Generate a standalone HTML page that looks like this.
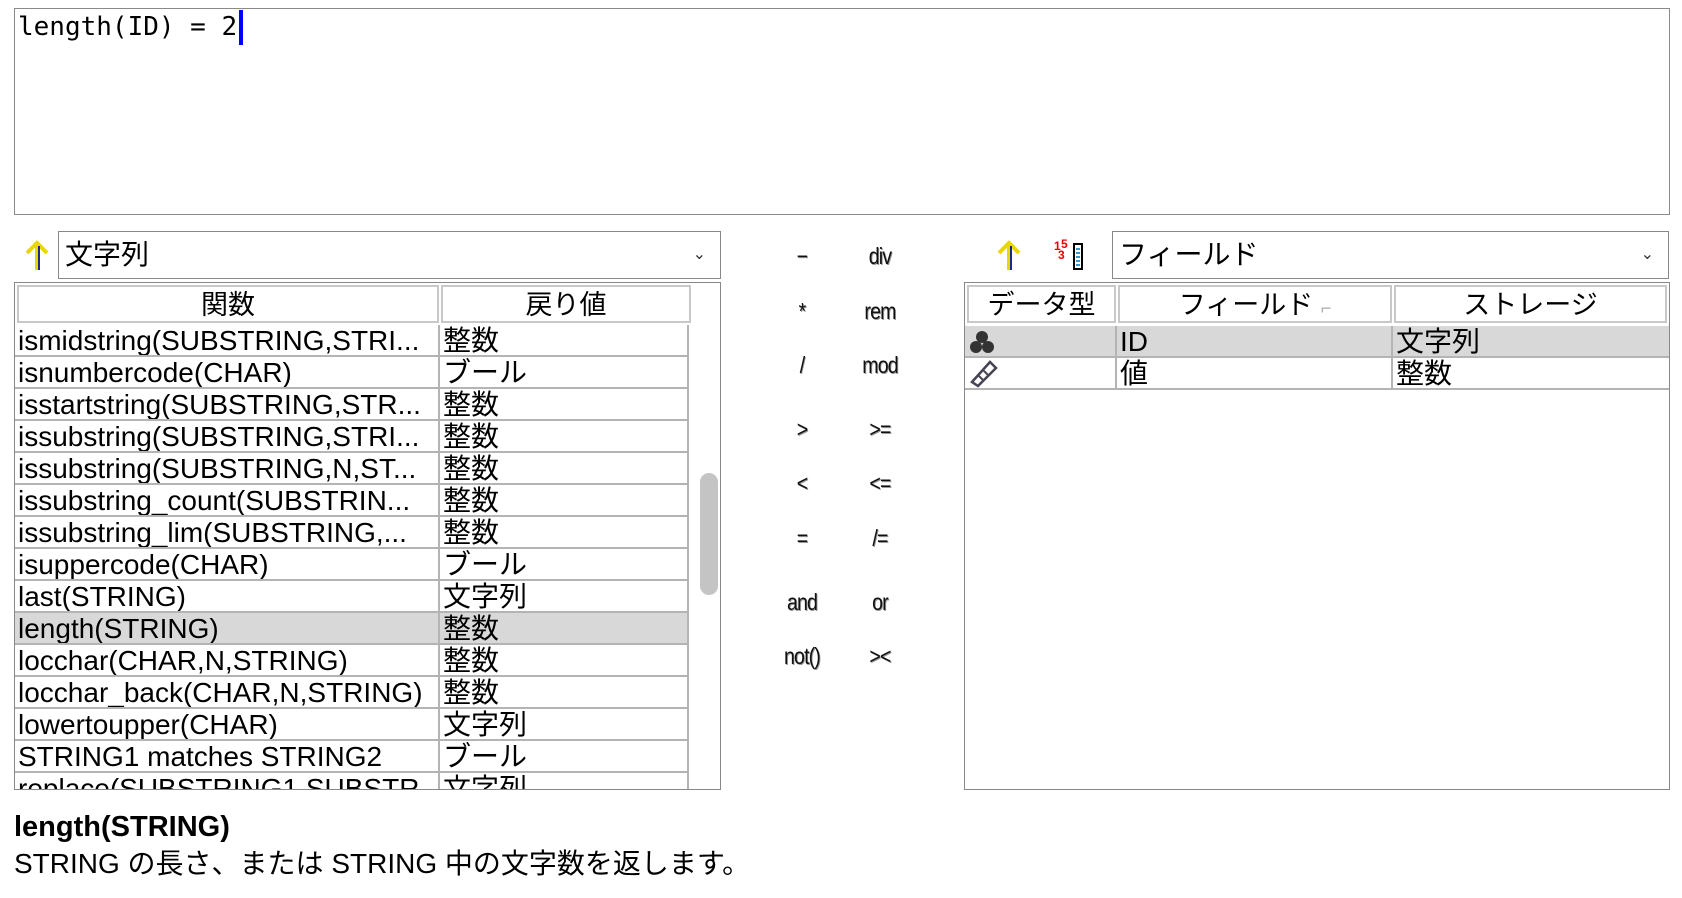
<!DOCTYPE html>
<html><head><meta charset="utf-8"><style>
*{box-sizing:border-box;margin:0;padding:0}
body{width:1682px;height:898px;background:#fff;position:relative;overflow:hidden;font-family:"Liberation Sans","Noto Sans CJK JP",sans-serif;color:#000}
.a{position:absolute}
.ta{left:14px;top:8px;width:1656px;height:207px;border:1px solid #8a8a8a}
.code{left:18px;top:10px;font-family:"DejaVu Sans Mono","Liberation Mono",monospace;font-size:26px;line-height:34px;white-space:pre}
.caret{left:239px;top:10px;width:4px;height:35px;background:#0000ff}
.combo{border:1px solid #888;height:48px;top:231px;font-size:28px;line-height:46px;padding-left:6px}
.chev{position:absolute;right:14px;top:0;font-size:16px;color:#333}
.tbl{border:1px solid #888;top:282px;height:508px;overflow:hidden}
.row{position:absolute;left:0;width:674px;height:32px;font-size:28px;line-height:32px;white-space:nowrap;overflow:hidden}
.cell{position:absolute;top:0;height:32px;border-right:2px solid #b4b4b4;border-bottom:2px solid #b4b4b4;padding-left:3px;overflow:hidden}
.hd{position:absolute;top:2px;height:38px;border:2px solid #c8c8c8;text-align:center;font-size:27px;line-height:36px;background:#fff}
.op{position:absolute;font-size:23px;transform:translateX(-50%) scaleX(.85);color:#111;text-shadow:1px 1px 0 #999;letter-spacing:-1px}
</style></head><body>
<div class="a ta"></div>
<div class="a code">length(ID) = 2</div>
<div class="a caret"></div>

<svg class="a" style="left:24px;top:240px" width="26" height="32" viewBox="0 0 26 32"><path d="M13 3 L13 30" stroke="#e8d800" stroke-width="4"/><path d="M3 13 L13 3 L23 13" stroke="#e8d800" stroke-width="4" fill="none"/><path d="M15 6 L15 30" stroke="#1a2a8a" stroke-width="2"/></svg>
<div class="a combo" style="left:58px;width:663px">文字列<span class="chev">&#8964;</span></div>

<div class="a tbl" style="left:14px;width:707px">
<div class="hd" style="left:2px;width:422px">関数</div>
<div class="hd" style="left:426px;width:250px">戻り値</div>
<div class="a" style="left:685px;top:190px;width:18px;height:122px;background:#c4c4c4;border-radius:9px"></div>
</div>

<div class="op" style="left:802px;top:243px">−</div>
<div class="op" style="left:880px;top:243px">div</div>
<div class="op" style="left:802px;top:298px">*</div>
<div class="op" style="left:880px;top:298px">rem</div>
<div class="op" style="left:802px;top:352px">/</div>
<div class="op" style="left:880px;top:352px">mod</div>
<div class="op" style="left:802px;top:416px">&gt;</div>
<div class="op" style="left:880px;top:416px">&gt;=</div>
<div class="op" style="left:802px;top:470px">&lt;</div>
<div class="op" style="left:880px;top:470px">&lt;=</div>
<div class="op" style="left:802px;top:525px">=</div>
<div class="op" style="left:880px;top:525px">/=</div>
<div class="op" style="left:802px;top:589px">and</div>
<div class="op" style="left:880px;top:589px">or</div>
<div class="op" style="left:802px;top:643px">not()</div>
<div class="op" style="left:880px;top:643px">&gt;&lt;</div>

<svg class="a" style="left:996px;top:240px" width="26" height="32" viewBox="0 0 26 32"><path d="M13 3 L13 30" stroke="#e8d800" stroke-width="4"/><path d="M3 13 L13 3 L23 13" stroke="#e8d800" stroke-width="4" fill="none"/><path d="M15 6 L15 30" stroke="#1a2a8a" stroke-width="2"/></svg>
<svg class="a" style="left:1054px;top:238px" width="34" height="34" viewBox="0 0 34 34"><text x="0" y="12" font-size="12" fill="#e00" font-family="Liberation Sans" font-weight="bold">1</text><text x="7" y="10" font-size="12" fill="#e00" font-family="Liberation Sans" font-weight="bold">5</text><text x="4" y="21" font-size="12" fill="#e00" font-family="Liberation Sans" font-weight="bold">3</text><rect x="20" y="6" width="8" height="25" fill="#fff" stroke="#000" stroke-width="2"/><path d="M22 11h4M22 15h4M22 19h4M22 23h4M22 27h4" stroke="#39c" stroke-width="2"/></svg>
<div class="a combo" style="left:1112px;width:557px">フィールド<span class="chev">&#8964;</span></div>

<div class="a tbl" style="left:964px;width:706px">
<div class="hd" style="left:2px;width:149px">データ型</div>
<div class="hd" style="left:153px;width:274px">フィールド <span style="color:#aaa;font-size:18px">⌐</span></div>
<div class="hd" style="left:429px;width:273px">ストレージ</div>
<div class="row" style="top:43px;width:704px;background:#d8d8d8">
<div class="cell" style="left:0;width:152px"><svg width="28" height="26" viewBox="0 0 28 26" style="margin-top:3px"><circle cx="14" cy="8" r="6" fill="#333"/><circle cx="8" cy="18" r="6" fill="#333"/><circle cx="20" cy="18" r="6" fill="#333"/></svg></div>
<div class="cell" style="left:152px;width:276px">ID</div>
<div class="cell" style="left:428px;width:276px;border-right:none">文字列</div></div>
<div class="row" style="top:75px;width:704px">
<div class="cell" style="left:0;width:152px"><svg width="32" height="30" viewBox="0 0 32 30"><path d="M4 24 L22 4 L28 10 L10 28 Z" fill="none" stroke="#445" stroke-width="2.5"/><path d="M10 17l5 5M15 12l5 5" stroke="#445" stroke-width="2"/></svg></div>
<div class="cell" style="left:152px;width:276px">値</div>
<div class="cell" style="left:428px;width:276px;border-right:none">整数</div></div>
</div>

<div class="a" style="left:14px;top:811px;font-size:29px;font-weight:bold">length(STRING)</div>
<div class="a" style="left:14px;top:842px;font-size:28px">STRING の長さ、または STRING 中の文字数を返します。</div>

<div class="a" style="left:15px;top:325px;width:674px;height:464px;overflow:hidden">
<div class="row" style="top:0"><div class="cell" style="left:0;width:425px">ismidstring(SUBSTRING,STRI...</div><div class="cell" style="left:425px;width:249px">整数</div></div>
<div class="row" style="top:32px"><div class="cell" style="left:0;width:425px">isnumbercode(CHAR)</div><div class="cell" style="left:425px;width:249px">ブール</div></div>
<div class="row" style="top:64px"><div class="cell" style="left:0;width:425px">isstartstring(SUBSTRING,STR...</div><div class="cell" style="left:425px;width:249px">整数</div></div>
<div class="row" style="top:96px"><div class="cell" style="left:0;width:425px">issubstring(SUBSTRING,STRI...</div><div class="cell" style="left:425px;width:249px">整数</div></div>
<div class="row" style="top:128px"><div class="cell" style="left:0;width:425px">issubstring(SUBSTRING,N,ST...</div><div class="cell" style="left:425px;width:249px">整数</div></div>
<div class="row" style="top:160px"><div class="cell" style="left:0;width:425px">issubstring_count(SUBSTRIN...</div><div class="cell" style="left:425px;width:249px">整数</div></div>
<div class="row" style="top:192px"><div class="cell" style="left:0;width:425px">issubstring_lim(SUBSTRING,...</div><div class="cell" style="left:425px;width:249px">整数</div></div>
<div class="row" style="top:224px"><div class="cell" style="left:0;width:425px">isuppercode(CHAR)</div><div class="cell" style="left:425px;width:249px">ブール</div></div>
<div class="row" style="top:256px"><div class="cell" style="left:0;width:425px">last(STRING)</div><div class="cell" style="left:425px;width:249px">文字列</div></div>
<div class="row" style="top:288px;background:#d8d8d8"><div class="cell" style="left:0;width:425px">length(STRING)</div><div class="cell" style="left:425px;width:249px">整数</div></div>
<div class="row" style="top:320px"><div class="cell" style="left:0;width:425px">locchar(CHAR,N,STRING)</div><div class="cell" style="left:425px;width:249px">整数</div></div>
<div class="row" style="top:352px"><div class="cell" style="left:0;width:425px">locchar_back(CHAR,N,STRING)</div><div class="cell" style="left:425px;width:249px">整数</div></div>
<div class="row" style="top:384px"><div class="cell" style="left:0;width:425px">lowertoupper(CHAR)</div><div class="cell" style="left:425px;width:249px">文字列</div></div>
<div class="row" style="top:416px"><div class="cell" style="left:0;width:425px">STRING1 matches STRING2</div><div class="cell" style="left:425px;width:249px">ブール</div></div>
<div class="row" style="top:448px"><div class="cell" style="left:0;width:425px">replace(SUBSTRING1,SUBSTR...</div><div class="cell" style="left:425px;width:249px">文字列</div></div>
</div>
</body></html>
